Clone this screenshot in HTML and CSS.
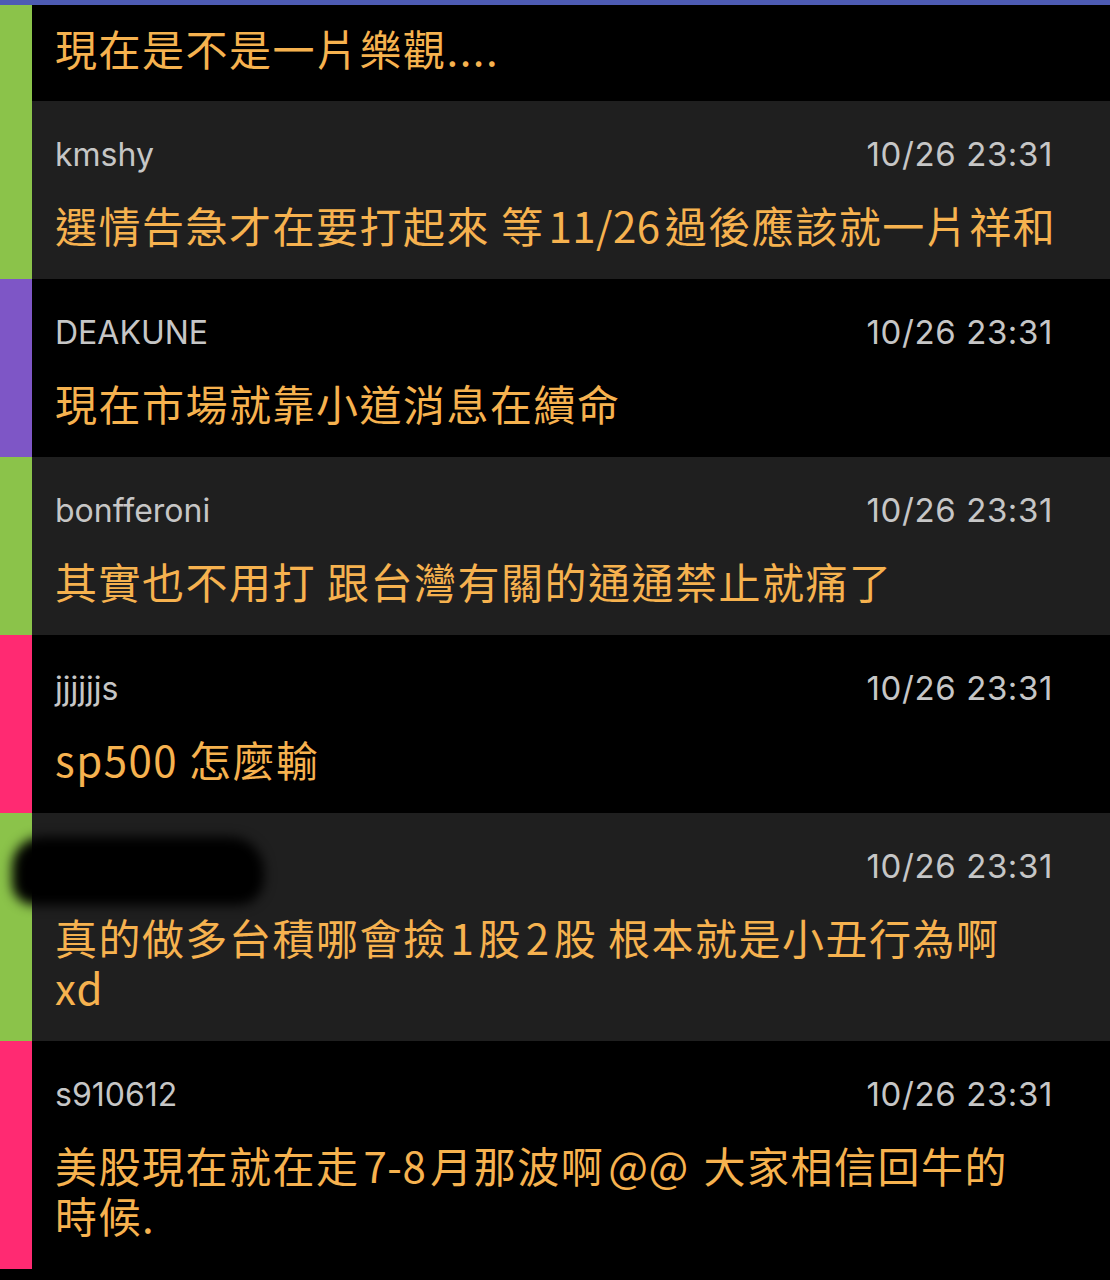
FILE: index.html
```html
<!DOCTYPE html>
<html lang="zh-Hant">
<head>
<meta charset="utf-8">
<title>推文</title>
<link rel="stylesheet" href="styles.css">
</head>
<body>
<div class="topline"></div>
<div class="list">
  <div class="row dark cut green">
    <div class="bar"></div>
    <div class="body">
      <div class="msg">現在是不是一片樂觀....</div>
    </div>
  </div>
  <div class="row gray green">
    <div class="bar"></div>
    <div class="body">
      <div class="head"><span class="user">kmshy</span><span class="time">10/26 23:31</span></div>
      <div class="msg">選情告急才在要打起來 等<span class="lat">11/26</span>過後應該就一片祥和</div>
    </div>
  </div>
  <div class="row dark purple">
    <div class="bar"></div>
    <div class="body">
      <div class="head"><span class="user">DEAKUNE</span><span class="time">10/26 23:31</span></div>
      <div class="msg">現在市場就靠小道消息在續命</div>
    </div>
  </div>
  <div class="row gray green">
    <div class="bar"></div>
    <div class="body">
      <div class="head"><span class="user">bonfferoni</span><span class="time">10/26 23:31</span></div>
      <div class="msg">其實也不用打 跟台灣有關的通通禁止就痛了</div>
    </div>
  </div>
  <div class="row dark pink">
    <div class="bar"></div>
    <div class="body">
      <div class="head"><span class="user">jjjjjjs</span><span class="time">10/26 23:31</span></div>
      <div class="msg">sp500 怎麼輸</div>
    </div>
  </div>
  <div class="row gray green">
    <div class="bar"></div>
    <div class="body">
      <div class="head"><span class="user redacted-name">&nbsp;</span><span class="time">10/26 23:31</span></div>
      <div class="msg">真的做多台積哪會撿<span class="lat">1</span>股<span class="lat">2</span>股 根本就是小丑行為啊<br>xd</div>
    </div>
    <div class="redact"></div>
  </div>
  <div class="row dark pink">
    <div class="bar"></div>
    <div class="body">
      <div class="head"><span class="user">s910612</span><span class="time">10/26 23:31</span></div>
      <div class="msg">美股現在就在走<span class="lat">7-8</span>月那波啊<span class="lat">@@</span> 大家相信回牛的<br>時候.</div>
    </div>
  </div>
</div>
</body>
</html>
```

FILE: styles.css
```css
* { box-sizing: border-box; }
html, body {
  margin: 0;
  padding: 0;
  background: #000;
}
body {
  width: 1110px;
  height: 1280px;
  overflow: hidden;
  font-family: "Noto Sans CJK TC", "Noto Sans", sans-serif;
}
.topline {
  height: 5px;
  background: #4d5bb3;
}
.list {
  display: flex;
  flex-direction: column;
}
.row {
  position: relative;
  display: flex;
}
.row.dark { background: #000; }
.row.gray { background: #1f1f1f; }
.bar {
  width: 32px;
  flex: 0 0 32px;
}
.green .bar { background: #8bc34a; }
.purple .bar { background: #7e56c6; }
.pink .bar { background: #ff2a72; }
.body {
  flex: 1;
  min-width: 0;
  padding: 33px 40px 29px 23px;
}
.cut .body {
  padding-top: 18px;
  padding-bottom: 28px;
}
.head {
  display: flex;
  justify-content: space-between;
  align-items: center;
  height: 40px;
  margin-right: 17px;
  margin-bottom: 26px;
  font-family: "Inter", "Liberation Sans", sans-serif;
  font-size: 32px;
  color: #c6c6c6;
}
.time {
  font-size: 33px;
  letter-spacing: 0.6px;
}
.msg {
  font-size: 42px;
  line-height: 50px;
  color: #f6b24f;
  letter-spacing: 1.5px;
}
.lat {
  margin: 0 4px;
  letter-spacing: 0.5px;
}
.redact {
  position: absolute;
  left: 12px;
  top: 24px;
  width: 252px;
  height: 68px;
  background: #000;
  border-radius: 30px 34px 26px 22px;
  filter: blur(6px);
}
```
